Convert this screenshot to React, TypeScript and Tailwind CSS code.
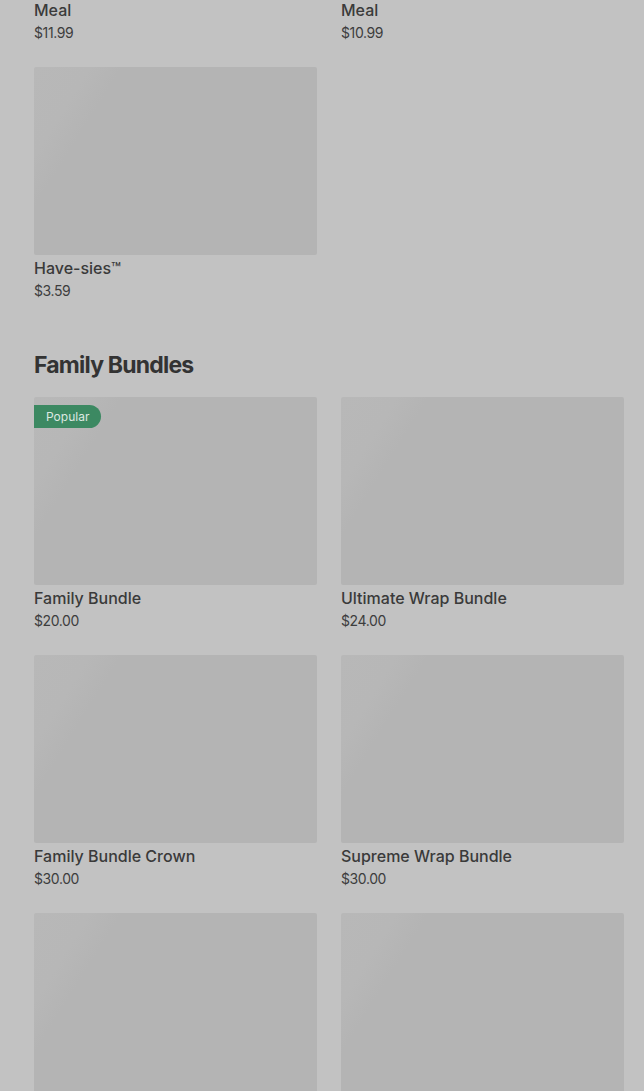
import React from "react";

type Item = { title: React.ReactNode; price: string; badge?: string };

function Card({ item, hideImage }: { item: Item; hideImage?: boolean }) {
  return (
    <div className="flex flex-col">
      {!hideImage && (
        <div className="relative h-[188px] w-full rounded-[2px] bg-[linear-gradient(122deg,#b8b8b8_0%,#b7b7b7_14%,#b4b4b4_22%,#b4b4b4_100%)]">
          {item.badge && (
            <span className="absolute left-0 top-[8px] flex h-[23px] items-center rounded-r-full bg-[#3c8962] pl-[12px] pr-[12px] text-[12px] text-[#dce8e1]">
              {item.badge}
            </span>
          )}
        </div>
      )}
      <div className="mt-[2px] text-[16px] font-medium leading-[22px] text-[#3a3a3a]">{item.title}</div>
      <div className="mt-[1px] text-[14px] leading-[22px] tracking-[-0.4px] text-[#3d3d3d]">{item.price}</div>
    </div>
  );
}

export default function App() {
  const family: Item[] = [
    { title: "Family Bundle", price: "$20.00", badge: "Popular" },
    { title: "Ultimate Wrap Bundle", price: "$24.00" },
    { title: "Family Bundle Crown", price: "$30.00" },
    { title: "Supreme Wrap Bundle", price: "$30.00" },
    { title: "", price: "" },
    { title: "", price: "" },
  ];
  return (
    <div
      className="h-[1091px] overflow-hidden bg-[#c2c2c2] pl-[34px] pr-[20px]"
      style={{ fontFamily: "Inter, 'Liberation Sans', sans-serif" }}
    >
      <div className="-mt-[25px] grid grid-cols-2 gap-x-[24px] gap-y-[23px]">
        <Card hideImage item={{ title: <>Bacon Chicken Wrap Royale<br />Meal</>, price: "$11.99" }} />
        <Card hideImage item={{ title: <>Chicken Wrap Supreme Combo<br />Meal</>, price: "$10.99" }} />
        <Card item={{ title: "Have-sies™", price: "$3.59" }} />
      </div>
      <h2 className="mt-[47px] mb-[16px] text-[23px] font-bold leading-[32px] tracking-[-0.8px] text-[#333333]">
        Family Bundles
      </h2>
      <div className="grid grid-cols-2 gap-x-[24px] gap-y-[23px]">
        {family.map((f, i) => (
          <Card key={i} item={f} />
        ))}
      </div>
    </div>
  );
}
